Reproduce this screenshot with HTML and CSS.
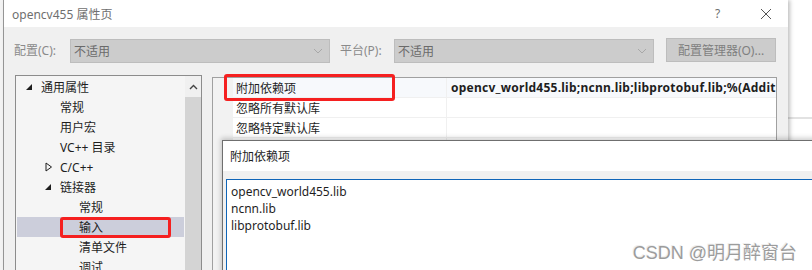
FILE: index.html
```html
<!DOCTYPE html>
<html lang="zh-CN">
<head>
    <meta charset="UTF-8">
    <title>opencv455 属性页</title>
    <link rel="stylesheet" href="styles.css">
</head>
<body>
    <div class="screen">
        <div class="edge-left"></div>

        <div class="dialog">
            <div class="titlebar">
                <span class="title">opencv455 属性页</span>
                <span class="tb-help">?</span>
                <span class="tb-close">
                    <svg width="12" height="12" viewBox="0 0 12 12"><path d="M1 1 L11 11 M11 1 L1 11" stroke="#555" stroke-width="1" fill="none"/></svg>
                </span>
            </div>

            <div class="toolbar">
                <span class="tool-label">配置(C):</span>
                <div class="combo">
                    <span>不适用</span>
                    <svg width="10" height="6" viewBox="0 0 10 6"><path d="M1 1 L5 5 L9 1" stroke="#a8a8a8" fill="none"/></svg>
                </div>
                <span class="tool-label second">平台(P):</span>
                <div class="combo">
                    <span>不适用</span>
                    <svg width="10" height="6" viewBox="0 0 10 6"><path d="M1 1 L5 5 L9 1" stroke="#a8a8a8" fill="none"/></svg>
                </div>
                <button class="config-btn">配置管理器(O)...</button>
            </div>

            <div class="main">
                <div class="tree">
                    <ul class="tree-list">
                        <li class="lvl1"><span class="twisty"><svg width="7" height="7" viewBox="0 0 7 7"><path d="M6 0 L6 6 L0 6 Z" fill="#1e1e1e"/></svg></span>通用属性</li>
                        <li class="lvl2"><span class="twisty"></span>常规</li>
                        <li class="lvl2"><span class="twisty"></span>用户宏</li>
                        <li class="lvl2"><span class="twisty"></span>VC++ 目录</li>
                        <li class="lvl2"><span class="twisty"><svg width="8" height="10" viewBox="0 0 8 10"><path d="M1 1 L6.5 5 L1 9 Z" stroke="#1e1e1e" fill="none"/></svg></span>C/C++</li>
                        <li class="lvl2"><span class="twisty"><svg width="7" height="7" viewBox="0 0 7 7"><path d="M6 0 L6 6 L0 6 Z" fill="#1e1e1e"/></svg></span>链接器</li>
                        <li class="lvl3"><span class="twisty"></span>常规</li>
                        <li class="lvl3 selected"><span class="twisty"></span>输入<span class="mark mark-tree"></span></li>
                        <li class="lvl3"><span class="twisty"></span>清单文件</li>
                        <li class="lvl3"><span class="twisty"></span>调试</li>
                    </ul>
                    <div class="scrollbar">
                        <div class="scroll-up">
                            <svg width="9" height="6" viewBox="0 0 9 6"><path d="M1 5 L4.5 1.5 L8 5" stroke="#444" stroke-width="1.4" fill="none"/></svg>
                        </div>
                        <div class="scroll-thumb"></div>
                    </div>
                </div>

                <div class="grid">
                    <div class="gutter"></div>
                    <div class="rows">
                        <div class="row current">
                            <div class="cell name">附加依赖项</div>
                            <div class="cell value">opencv_world455.lib;ncnn.lib;libprotobuf.lib;%(AdditionalDependencies)</div>
                        </div>
                        <div class="row">
                            <div class="cell name">忽略所有默认库</div>
                            <div class="cell value"></div>
                        </div>
                        <div class="row">
                            <div class="cell name">忽略特定默认库</div>
                            <div class="cell value"></div>
                        </div>
                        <div class="row">
                            <div class="cell name"></div>
                            <div class="cell value"></div>
                        </div>
                    </div>
                    <span class="mark mark-grid"></span>
                </div>
            </div>
        </div>

        <div class="edge-right"></div>

        <div class="popup">
            <div class="popup-title">附加依赖项</div>
            <div class="popup-body">
                <div class="editbox">
                    <div>opencv_world455.lib</div>
                    <div>ncnn.lib</div>
                    <div>libprotobuf.lib</div>
                </div>
            </div>
        </div>

        <div class="watermark">CSDN @明月醉窗台</div>
    </div>
</body>
</html>
```

FILE: styles.css
```css
* {
    margin: 0;
    padding: 0;
    box-sizing: border-box;
}

body {
    font-family: 'Noto Sans', 'Noto Sans CJK SC', sans-serif;
    font-size: 12px;
    color: #1e1e1e;
    background: #fff;
}

.screen {
    position: relative;
    width: 812px;
    height: 270px;
    overflow: hidden;
    display: flex;
}

.edge-left {
    flex: none;
    width: 4px;
    background: #f3f3f3;
    border-right: 1px solid #9a9a9a;
}

.dialog {
    width: 784px;
    flex: none;
    background: #f0f0f0;
    box-shadow: 2px 0 4px rgba(0, 0, 0, 0.25);
    position: relative;
    z-index: 1;
}

.edge-right {
    flex: 1;
    background: #fff;
    padding-top: 117px;
}

.edge-right::before {
    content: '';
    display: block;
    height: 2px;
    background: #e2e2e2;
}

/* title bar */
.titlebar {
    height: 27px;
    background: #fff;
    display: flex;
    align-items: center;
    padding-left: 8px;
}

.title {
    color: #6f6f6f;
    flex: 1;
}

.tb-help {
    color: #6f6f6f;
    width: 45px;
}

.tb-close {
    width: 28px;
    display: flex;
}

/* config toolbar */
.toolbar {
    display: flex;
    align-items: flex-start;
    padding: 12px 0 0 10px;
    height: 36px;
}

.tool-label {
    width: 56px;
    color: #8a8a8a;
    line-height: 24px;
}

.tool-label.second {
    width: 54px;
    margin-left: 10px;
}

.combo {
    width: 260px;
    height: 24px;
    background: #cccccc;
    border: 1px solid #bdbdbd;
    color: #6a6a6a;
    display: flex;
    align-items: center;
    justify-content: space-between;
    padding: 0 6px 0 3px;
}

.config-btn {
    margin: -1px 0 0 12px;
    width: 110px;
    height: 24px;
    background: #cccccc;
    border: 1px solid #bdbdbd;
    color: #7f7f7f;
    font-family: inherit;
    font-size: 12px;
}

/* main area */
.main {
    display: flex;
    padding: 12px 0 0 11px;
    gap: 10px;
    align-items: flex-start;
}

.tree {
    flex: none;
    width: 187px;
    height: 200px;
    background: #f5f5f5;
    border: 1px solid #8c8c8c;
    border-bottom: none;
    display: flex;
}

.tree-list {
    list-style: none;
    flex: 1;
    padding-top: 1px;
}

.tree-list li {
    position: relative;
    height: 20px;
    display: flex;
    align-items: center;
    margin: 0 1px;
    white-space: nowrap;
}

.tree-list .lvl1 { padding-left: 5px; }
.tree-list .lvl2 { padding-left: 24px; }
.tree-list .lvl3 { padding-left: 43px; }

.twisty {
    width: 19px;
    display: flex;
    align-items: center;
    padding-left: 4px;
}

.tree-list .selected {
    background: #cccedb;
}

.scrollbar {
    width: 16px;
    display: flex;
    flex-direction: column;
}

.scroll-up {
    height: 21px;
    display: flex;
    align-items: center;
    justify-content: center;
    background: #f0f0f0;
}

.scroll-thumb {
    flex: 1;
    background: #d4d4d4;
}

/* property grid */
.grid {
    position: relative;
    flex: none;
    width: 565px;
    height: 200px;
    margin-top: 2px;
    background: #f0f0f0;
    border: 1px solid #a0a0a0;
    display: flex;
}

.gutter {
    flex: none;
    width: 20px;
    background: #f2f2f2;
}

.rows {
    flex: 1;
    min-width: 0;
    overflow: hidden;
}

.row {
    display: flex;
    height: 20px;
    border-bottom: 1px solid #f0f0f0;
    background: #fff;
}

.row.current {
    background: #f7f9fc;
}

.cell {
    display: flex;
    align-items: center;
    white-space: nowrap;
    overflow: hidden;
}

.cell.name {
    flex: none;
    width: 214px;
    padding-left: 3px;
    border-right: 1px solid #f0f0f0;
}

.cell.value {
    flex: 1;
    min-width: 0;
    padding-left: 4px;
    font-weight: bold;
    letter-spacing: 0.25px;
}

/* red annotation frames */
.mark {
    position: absolute;
    border: 3px solid #f52020;
    border-radius: 3px;
}

.mark-tree {
    left: 43px;
    top: 0;
    width: 111px;
    height: 21px;
}

.mark-grid {
    left: 11px;
    top: -4px;
    width: 171px;
    height: 27px;
}

/* edit popup */
.popup {
    position: absolute;
    left: 222px;
    top: 140px;
    width: 620px;
    height: 140px;
    z-index: 2;
    background: #f0f0f0;
    border-top: 1px solid #6f6f6f;
    border-left: 1px solid #6f6f6f;
    box-shadow: -1px -2px 5px rgba(0, 0, 0, 0.2);
}

.popup-title {
    height: 30px;
    background: #fff;
    display: flex;
    align-items: center;
    padding-left: 7px;
}

.popup-body {
    padding: 8px 0 0 3px;
}

.editbox {
    height: 120px;
    background: #fff;
    border: 1px solid #0f65b8;
    padding: 3px 4px;
    line-height: 17px;
}

.watermark {
    position: absolute;
    right: 15px;
    bottom: 6px;
    z-index: 3;
    font-family: 'Liberation Sans', 'Noto Sans CJK SC', sans-serif;
    font-size: 18px;
    color: #9c9c9c;
    text-shadow: 1px 1px 0 #fff, -1px -1px 0 #eee;
}
```
